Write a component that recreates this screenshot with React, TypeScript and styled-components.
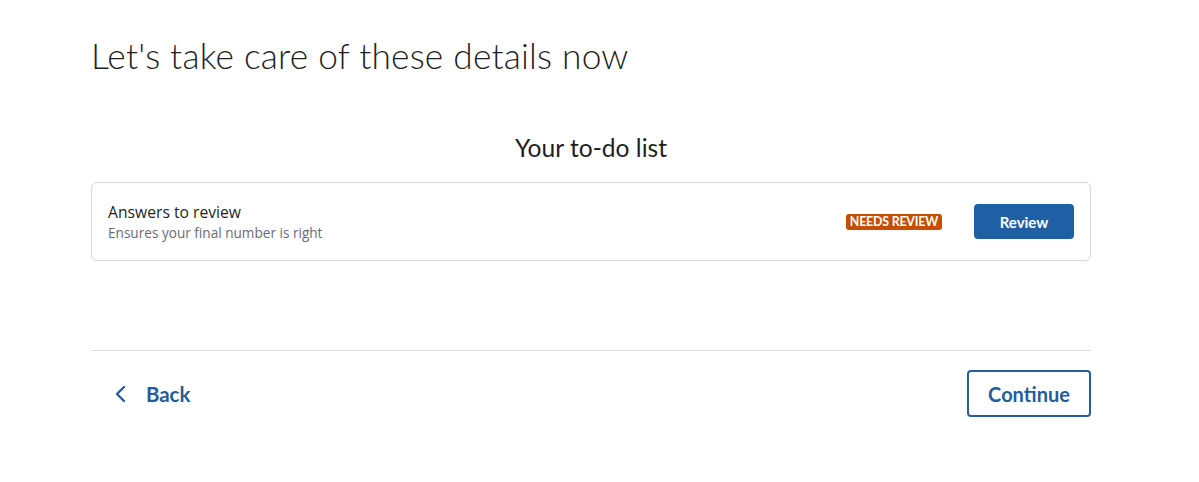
import React from "react";
import styled, { createGlobalStyle } from "styled-components";

const GlobalStyle = createGlobalStyle`
  body {
    margin: 0;
    background: #ffffff;
    font-family: Lato, "Open Sans", sans-serif;
    color: #1a1a1a;
  }
`;

const Page = styled.div`
  width: 1000px;
  margin-left: 91px;
  padding-top: 34px;
`;

const Heading = styled.h1`
  margin: 0;
  font-family: Lato, sans-serif;
  font-weight: 300;
  font-size: 35.3px;
  line-height: 44px;
  color: #1f1f23;
  letter-spacing: 0.2px;
`;

const ListTitle = styled.h2`
  margin: 54px 0 18px;
  text-align: center;
  font-family: Lato, sans-serif;
  font-weight: 400;
  font-size: 24.6px;
  line-height: 32px;
  color: #1f1f23;
`;

const Card = styled.div`
  display: flex;
  align-items: center;
  height: 79px;
  box-sizing: border-box;
  border: 1px solid #d4d7dc;
  border-radius: 6px;
  padding: 0 16px 0 16px;
`;

const CardText = styled.div`
  flex: 1;
  display: flex;
  flex-direction: column;
  gap: 4px;
`;

const ItemTitle = styled.div`
  font-family: "Open Sans", sans-serif;
  font-size: 15.7px;
  line-height: 18px;
  color: #1f1f23;
`;

const ItemSub = styled.div`
  font-family: "Open Sans", sans-serif;
  font-size: 13.6px;
  line-height: 16px;
  color: #6b6c72;
`;

const Badge = styled.span`
  background: #c44f00;
  color: #ffffff;
  font-size: 12.4px;
  font-weight: 700;
  line-height: 16px;
  padding: 0 4px;
  border-radius: 3px;
  margin-right: 32px;
  letter-spacing: -0.2px;
`;

const SolidButton = styled.button`
  width: 100px;
  height: 35px;
  border: none;
  border-radius: 4px;
  background: #1f5fa3;
  color: #ffffff;
  font-family: Lato, sans-serif;
  font-weight: 700;
  font-size: 15px;
  cursor: pointer;
`;

const Footer = styled.div`
  margin-top: 89px;
  border-top: 1px solid #dcdee2;
  padding-top: 19px;
  display: flex;
  justify-content: space-between;
  align-items: center;
`;

const BackLink = styled.button`
  display: flex;
  align-items: center;
  gap: 18px;
  background: none;
  border: none;
  padding: 0 0 0 23px;
  color: #255c99;
  font-family: Lato, sans-serif;
  font-weight: 700;
  font-size: 20.4px;
  cursor: pointer;
`;

const OutlineButton = styled.button`
  width: 124px;
  height: 47px;
  box-sizing: border-box;
  border: 2px solid #255c99;
  border-radius: 4px;
  background: #ffffff;
  color: #255c99;
  font-family: Lato, sans-serif;
  font-weight: 700;
  font-size: 20px;
  cursor: pointer;
`;

const Chevron = () => (
  <svg width="14" height="18" viewBox="0 0 14 18" fill="none">
    <path d="M10 2 L3 9 L10 16" stroke="#255c99" strokeWidth="2.4" strokeLinecap="round" strokeLinejoin="round" />
  </svg>
);

export default function App() {
  return (
    <>
      <GlobalStyle />
      <Page>
        <Heading>Let's take care of these details now</Heading>
        <ListTitle>Your to-do list</ListTitle>
        <Card>
          <CardText>
            <ItemTitle>Answers to review</ItemTitle>
            <ItemSub>Ensures your final number is right</ItemSub>
          </CardText>
          <Badge>NEEDS REVIEW</Badge>
          <SolidButton>Review</SolidButton>
        </Card>
        <Footer>
          <BackLink>
            <Chevron />
            Back
          </BackLink>
          <OutlineButton>Continue</OutlineButton>
        </Footer>
      </Page>
    </>
  );
}
